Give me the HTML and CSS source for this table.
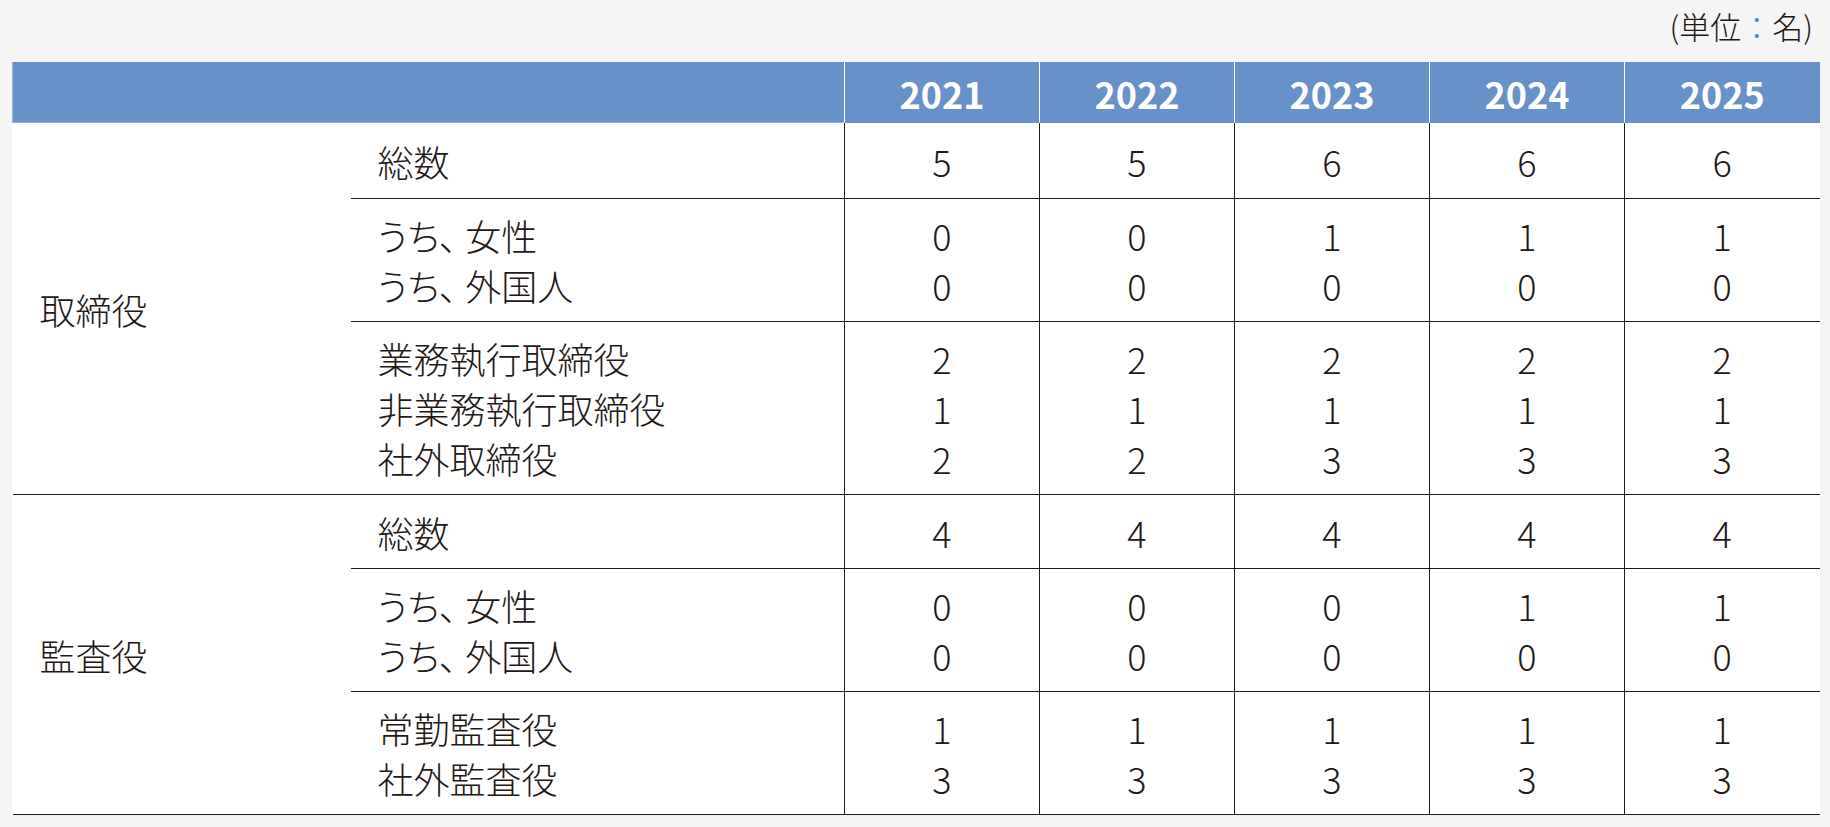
FILE: index.html
```html
<!DOCTYPE html>
<html lang="ja">
<head>
<meta charset="utf-8">
<title>役員構成</title>
<link rel="stylesheet" href="styles.css">
</head>
<body>
<div class="page">
  <div class="unit">(単位<span class="colon">：</span>名)</div>
  <table class="board">
    <colgroup>
      <col class="c-cat">
      <col class="c-item">
      <col class="c-year"><col class="c-year"><col class="c-year"><col class="c-year"><col class="c-year">
    </colgroup>
    <thead>
      <tr>
        <th colspan="2" class="blank"></th>
        <th>2021</th><th>2022</th><th>2023</th><th>2024</th><th>2025</th>
      </tr>
    </thead>
    <tbody class="group">
      <tr class="single">
        <td rowspan="3" class="cat">取締役</td>
        <td class="item">総数</td>
        <td>5</td><td>5</td><td>6</td><td>6</td><td>6</td>
      </tr>
      <tr>
        <td class="item">うち<span class="comma">、</span>女性<br>うち<span class="comma">、</span>外国人</td>
        <td>0<br>0</td><td>0<br>0</td><td>1<br>0</td><td>1<br>0</td><td>1<br>0</td>
      </tr>
      <tr>
        <td class="item">業務執行取締役<br>非業務執行取締役<br>社外取締役</td>
        <td>2<br>1<br>2</td><td>2<br>1<br>2</td><td>2<br>1<br>3</td><td>2<br>1<br>3</td><td>2<br>1<br>3</td>
      </tr>
    </tbody>
    <tbody class="group">
      <tr class="single short">
        <td rowspan="3" class="cat last">監査役</td>
        <td class="item">総数</td>
        <td>4</td><td>4</td><td>4</td><td>4</td><td>4</td>
      </tr>
      <tr>
        <td class="item">うち<span class="comma">、</span>女性<br>うち<span class="comma">、</span>外国人</td>
        <td>0<br>0</td><td>0<br>0</td><td>0<br>0</td><td>1<br>0</td><td>1<br>0</td>
      </tr>
      <tr>
        <td class="item">常勤監査役<br>社外監査役</td>
        <td>1<br>3</td><td>1<br>3</td><td>1<br>3</td><td>1<br>3</td><td>1<br>3</td>
      </tr>
    </tbody>
  </table>
</div>
</body>
</html>
```

FILE: styles.css
```css
html, body {
  margin: 0;
  padding: 0;
  background: #f4f5f4;
}

.page {
  width: 1830px;
  min-height: 827px;
  font-family: "Noto Sans CJK JP", "Noto Sans", sans-serif;
  font-feature-settings: "palt";
  color: #231815;
}

.unit {
  height: 62px;
  box-sizing: border-box;
  padding: 5px 17px 0 0;
  text-align: right;
  font-size: 31px;
  line-height: 42px;
  font-weight: 300;
  font-feature-settings: normal;
}

.unit .colon {
  color: #5b8bc9;
}

.comma {
  margin-right: 8px;
}

.board {
  margin-left: 12px;
  width: 1807px;
  border-collapse: collapse;
  table-layout: fixed;
  background: #ffffff;
}

.c-cat { width: 338px; }
.c-item { width: 494px; }
.c-year { width: 195px; }

.board th {
  height: 61px;
  padding: 0;
  background: #6791c9;
  color: #ffffff;
  font-size: 36px;
  font-weight: 700;
  line-height: 40px;
  text-align: center;
  border-left: 1px solid #ffffff;
}

.board th.blank {
  border-left: 1px solid #9cb8de;
  box-shadow: inset 0 -1px 0 #8eaed9;
}

.board td {
  padding: 11px 0;
  font-size: 36px;
  font-weight: 300;
  line-height: 50px;
  text-align: center;
  vertical-align: middle;
  border-left: 1px solid #231815;
  border-top: 1px solid #231815;
}

.board td.cat,
.board td.item {
  text-align: left;
  padding-left: 27px;
  border-left: none;
}

.board tr.single td {
  height: 53px;
}

.board tr.single.short td {
  height: 51px;
}

.board tr.single td.cat {
  height: auto;
}

.board thead + tbody tr:first-child td {
  border-top: none;
}

.board tbody:last-child tr:last-child td,
.board td.cat.last {
  border-bottom: 1px solid #231815;
}
```
